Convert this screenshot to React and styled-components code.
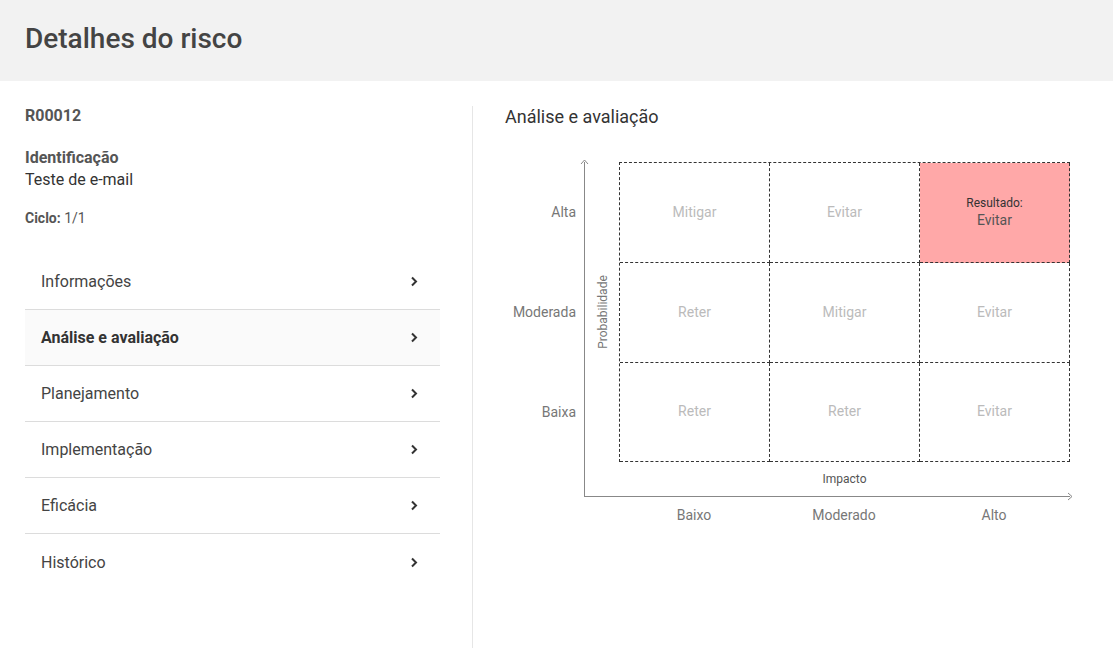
import React from "react";
import styled, { createGlobalStyle } from "styled-components";

const GlobalStyle = createGlobalStyle`
  html, body {
    margin: 0;
    padding: 0;
    background: #ffffff;
    font-family: Roboto, "Liberation Sans", Arial, sans-serif;
  }
  * { box-sizing: border-box; }
`;

const menu = [
  { label: "Informações" },
  { label: "Análise e avaliação", active: true },
  { label: "Planejamento" },
  { label: "Implementação" },
  { label: "Eficácia" },
  { label: "Histórico" },
];

const rows = [
  { label: "Alta", cells: ["Mitigar", "Evitar", "Evitar"] },
  { label: "Moderada", cells: ["Reter", "Mitigar", "Evitar"] },
  { label: "Baixa", cells: ["Reter", "Reter", "Evitar"] },
];

const columns = ["Baixo", "Moderado", "Alto"];

function Chevron() {
  return (
    <svg width="8" height="11" viewBox="0 0 8 11">
      <path d="M2 1.5l4 4-4 4" fill="none" stroke="#333" strokeWidth="2" />
    </svg>
  );
}

function App() {
  return (
    <Page>
      <GlobalStyle />
      <Header>
        <Title>Detalhes do risco</Title>
      </Header>
      <Main>
        <Sidebar>
          <Code>R00012</Code>
          <FieldLabel>Identificação</FieldLabel>
          <FieldValue>Teste de e-mail</FieldValue>
          <Cycle>
            <b>Ciclo:</b> 1/1
          </Cycle>
          <Menu>
            {menu.map((item) => (
              <MenuItem key={item.label} $active={item.active}>
                <span>{item.label}</span>
                <Chevron />
              </MenuItem>
            ))}
          </Menu>
        </Sidebar>
        <Divider />
        <Content>
          <SectionTitle>Análise e avaliação</SectionTitle>
          <Chart>
            <RowLabels>
              {rows.map((r) => (
                <AxisLabel key={r.label}>{r.label}</AxisLabel>
              ))}
            </RowLabels>
            <Plot>
              <ArrowUp width="9" height="6" viewBox="0 0 9 6">
                <path d="M1 5l3.5-4 3.5 4" fill="none" stroke="#888" strokeWidth="1" />
              </ArrowUp>
              <ArrowRight width="6" height="9" viewBox="0 0 6 9">
                <path d="M1 1l4 3.5-4 3.5" fill="none" stroke="#888" strokeWidth="1" />
              </ArrowRight>
              <YTitle>
                <span>Probabilidade</span>
              </YTitle>
              <Matrix>
                {rows.map((r, ri) =>
                  r.cells.map((c, ci) => {
                    const result = ri === 0 && ci === 2;
                    return (
                      <Cell key={`${ri}-${ci}`} $result={result}>
                        {result && <ResultLabel>Resultado:</ResultLabel>}
                        <span>{c}</span>
                      </Cell>
                    );
                  })
                )}
              </Matrix>
              <span />
              <XTitle>Impacto</XTitle>
            </Plot>
          </Chart>
          <ColLabels>
            {columns.map((c) => (
              <AxisLabel key={c} $center>
                {c}
              </AxisLabel>
            ))}
          </ColLabels>
        </Content>
      </Main>
    </Page>
  );
}

const Page = styled.div`
  width: 100%;
  min-height: 648px;
  display: flex;
  flex-direction: column;
`;

const Header = styled.header`
  height: 81px;
  background: #f2f2f2;
  display: flex;
  align-items: center;
  padding-left: 25px;
`;

const Title = styled.h1`
  margin: 0;
  font-size: 28px;
  font-weight: 500;
  color: #444;
  line-height: 34px;
  padding-bottom: 3px;
`;

const Main = styled.main`
  flex: 1;
  display: flex;
  padding-top: 24px;
  height: 567px;
`;

const Sidebar = styled.aside`
  width: 440px;
  padding-left: 25px;
  display: flex;
  flex-direction: column;
`;

const Code = styled.div`
  font-size: 16px;
  font-weight: 700;
  color: #555;
  line-height: 20px;
  margin-top: 1px;
`;

const FieldLabel = styled.div`
  margin-top: 22px;
  font-size: 16px;
  font-weight: 700;
  color: #555;
  line-height: 20px;
`;

const FieldValue = styled.div`
  margin-top: 1px;
  font-size: 16px;
  color: #333;
  line-height: 22px;
`;

const Cycle = styled.div`
  margin-top: 18px;
  font-size: 14px;
  color: #555;
  line-height: 18px;
  b {
    font-weight: 700;
  }
`;

const Menu = styled.nav`
  margin-top: 27px;
  display: flex;
  flex-direction: column;
`;

const MenuItem = styled.div`
  height: 56px;
  display: flex;
  align-items: center;
  justify-content: space-between;
  padding: 0 22px 0 16px;
  font-size: 16px;
  color: ${(p) => (p.$active ? "#333" : "#444")};
  font-weight: ${(p) => (p.$active ? 700 : 400)};
  background: ${(p) => (p.$active ? "#fafafa" : "transparent")};
  border-bottom: 1px solid #dcdcdc;
  &:last-child {
    border-bottom: none;
  }
`;

const Divider = styled.div`
  width: 1px;
  margin-left: 32px;
  margin-top: 1px;
  background: #e6e6e6;
`;

const Content = styled.section`
  flex: 1;
  padding-left: 32px;
  display: flex;
  flex-direction: column;
`;

const SectionTitle = styled.h2`
  margin: 0;
  font-size: 18px;
  font-weight: 400;
  color: #333;
  line-height: 24px;
`;

const Chart = styled.div`
  margin-top: 33px;
  display: flex;
`;

const RowLabels = styled.div`
  width: 79px;
  padding-right: 8px;
  display: grid;
  grid-template-rows: repeat(3, 100px);
  align-content: start;
`;

const AxisLabel = styled.div`
  display: flex;
  align-items: center;
  justify-content: ${(p) => (p.$center ? "center" : "flex-end")};
  font-size: 14px;
  color: #777;
`;

const Plot = styled.div`
  position: relative;
  width: 486px;
  height: 335px;
  border-left: 1px solid #888;
  border-bottom: 1px solid #888;
  display: grid;
  grid-template-columns: 34px 451px;
  grid-template-rows: 300px 34px;
`;

const ArrowUp = styled.svg`
  position: absolute;
  top: -3px;
  left: -5px;
`;

const ArrowRight = styled.svg`
  position: absolute;
  right: -3px;
  bottom: -5px;
`;

const YTitle = styled.div`
  display: flex;
  align-items: center;
  justify-content: center;
  span {
    transform: rotate(-90deg);
    font-size: 12px;
    color: #777;
    white-space: nowrap;
    display: block;
    margin-left: 1px;
  }
`;

const Matrix = styled.div`
  display: grid;
  grid-template-columns: repeat(3, 150px);
  grid-template-rows: 100px 100px 99px;
  border-top: 1px dashed #333;
  border-left: 1px dashed #333;
`;

const Cell = styled.div`
  display: flex;
  flex-direction: column;
  align-items: center;
  justify-content: center;
  border-right: 1px dashed #333;
  border-bottom: 1px dashed #333;
  background: ${(p) => (p.$result ? "#ffa8a8" : "transparent")};
  font-size: 14px;
  color: ${(p) => (p.$result ? "#555" : "#bbb")};
  line-height: 18px;
  padding-bottom: 2px;
`;

const ResultLabel = styled.span`
  font-size: 12px;
  color: #333;
  line-height: 16px;
`;

const XTitle = styled.div`
  display: flex;
  align-items: center;
  justify-content: center;
  font-size: 12px;
  color: #555;
`;

const ColLabels = styled.div`
  margin-left: 114px;
  width: 451px;
  display: grid;
  grid-template-columns: repeat(3, 150px);
  padding-top: 9px;
  line-height: 18px;
`;

export default App;
